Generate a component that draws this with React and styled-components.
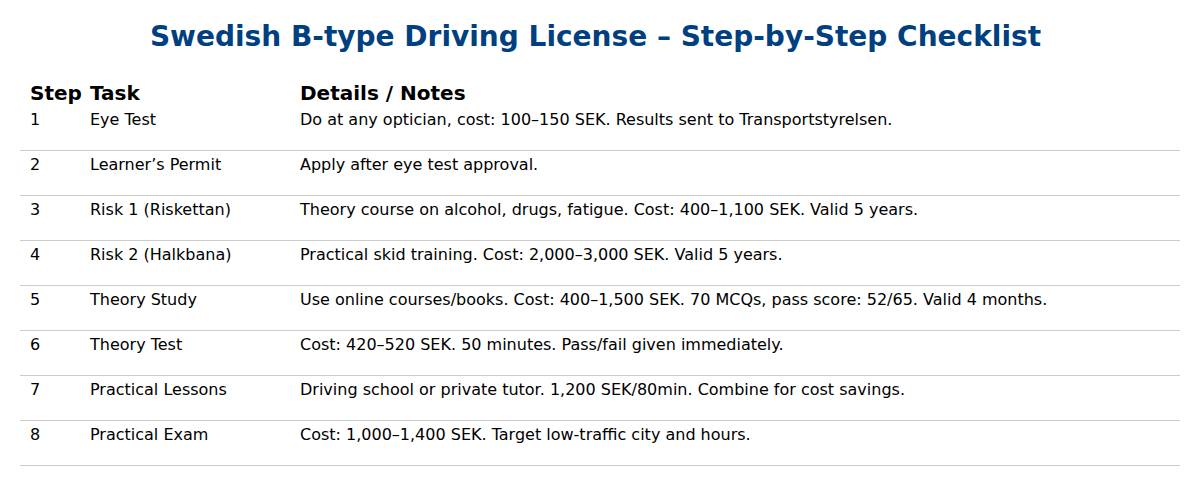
import React from 'react';
import styled, { createGlobalStyle } from 'styled-components';

const steps = [
  { step: 1, task: 'Eye Test', details: 'Do at any optician, cost: 100–150 SEK. Results sent to Transportstyrelsen.' },
  { step: 2, task: 'Learner’s Permit', details: 'Apply after eye test approval.' },
  { step: 3, task: 'Risk 1 (Riskettan)', details: 'Theory course on alcohol, drugs, fatigue. Cost: 400–1,100 SEK. Valid 5 years.' },
  { step: 4, task: 'Risk 2 (Halkbana)', details: 'Practical skid training. Cost: 2,000–3,000 SEK. Valid 5 years.' },
  { step: 5, task: 'Theory Study', details: 'Use online courses/books. Cost: 400–1,500 SEK. 70 MCQs, pass score: 52/65. Valid 4 months.' },
  { step: 6, task: 'Theory Test', details: 'Cost: 420–520 SEK. 50 minutes. Pass/fail given immediately.' },
  { step: 7, task: 'Practical Lessons', details: 'Driving school or private tutor. 1,200 SEK/80min. Combine for cost savings.' },
  { step: 8, task: 'Practical Exam', details: 'Cost: 1,000–1,400 SEK. Target low-traffic city and hours.' },
];

const App = () => {
  return (
    <>
      <GlobalStyle />
      <Page>
        <Title>Swedish B-type Driving License – Step-by-Step Checklist</Title>
        <Table>
          <HeaderRow>
            <HeadCell>Step</HeadCell>
            <HeadCell>Task</HeadCell>
            <HeadCell>Details / Notes</HeadCell>
          </HeaderRow>
          {steps.map((s) => (
            <Row key={s.step}>
              <Cell>{s.step}</Cell>
              <Cell>{s.task}</Cell>
              <Cell>{s.details}</Cell>
            </Row>
          ))}
        </Table>
      </Page>
    </>
  );
};

export default App;

const GlobalStyle = createGlobalStyle`
  body {
    margin: 0;
    background: #ffffff;
    font-family: "DejaVu Sans", Verdana, sans-serif;
    color: #000;
  }
`;

// 전체 페이지
const Page = styled.div`
  padding: 19px 20px 0;
`;

const Title = styled.h1`
  margin: 0 0 26px;
  padding-right: 9px;
  text-align: center;
  font-size: 28px;
  line-height: 36px;
  font-weight: bold;
  color: #004080;
`;

const Table = styled.div`
  display: flex;
  flex-direction: column;
`;

// step / task / details 세 칸
const HeaderRow = styled.div`
  display: grid;
  grid-template-columns: 60px 210px 1fr;
`;

const Row = styled(HeaderRow)`
  border-bottom: 1px solid #cccccc;
`;

const HeadCell = styled.div`
  padding: 0 10px;
  font-size: 20px;
  line-height: 25px;
  font-weight: bold;
`;

const Cell = styled.div`
  padding: 5px 10px 21px;
  font-size: 16px;
  line-height: 18px;
`;
